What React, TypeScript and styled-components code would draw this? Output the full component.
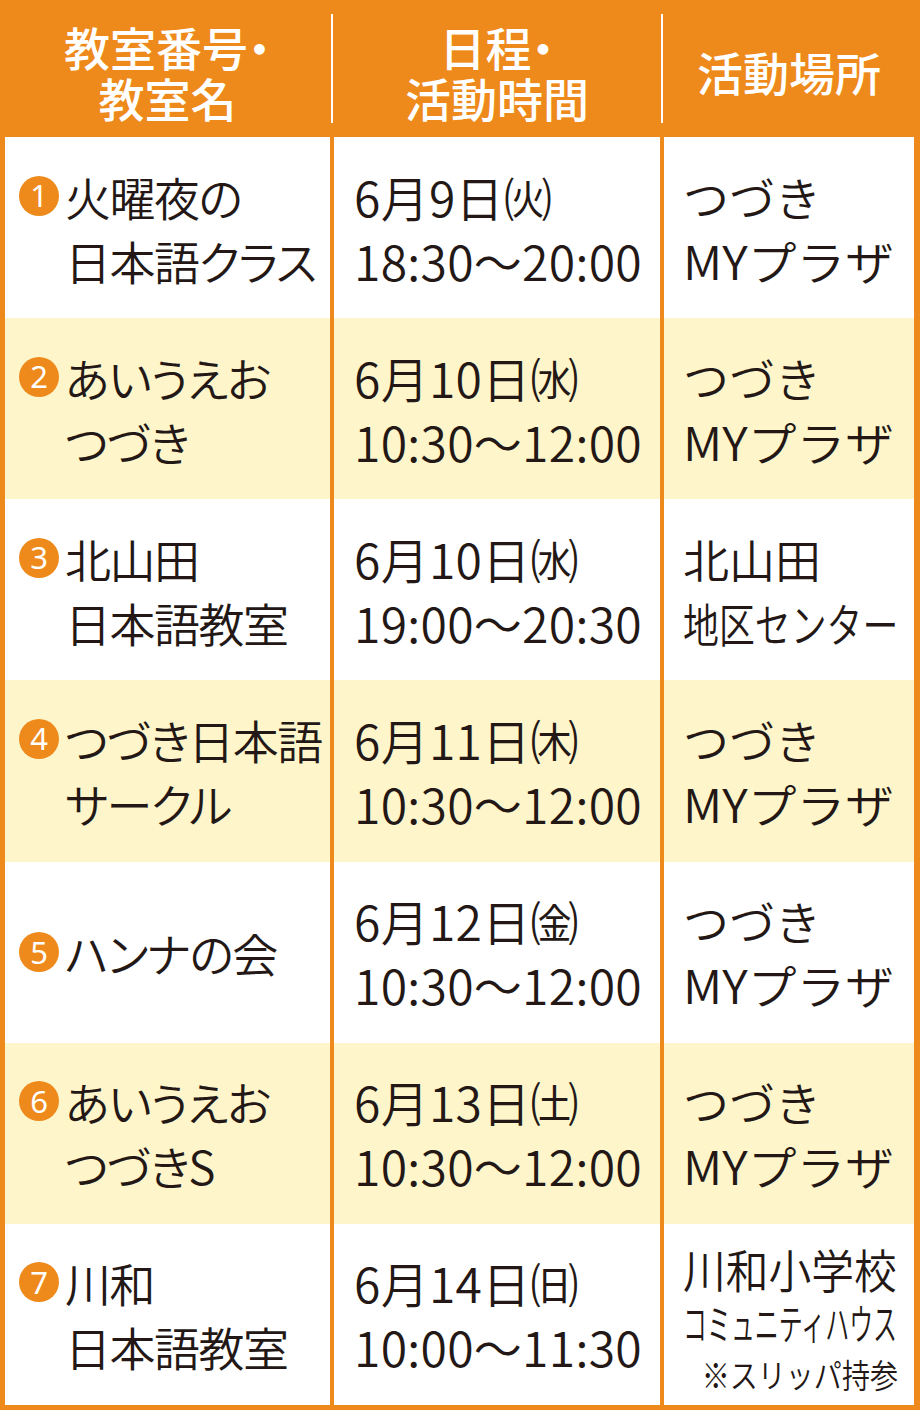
import React from 'react';
import styled, { createGlobalStyle } from 'styled-components';

const ORANGE = '#ee8a1b';
const CREAM = '#fef5cb';
const INK = '#231815';

const GlobalStyle = createGlobalStyle`
  html, body {
    margin: 0;
    padding: 0;
    background: #fff;
  }
  body {
    font-family: "Noto Sans CJK JP", "Noto Sans", sans-serif;
  }
`;

type PlaceLine = {
  text: string;
  size?: number;
  scale?: number;
  right?: boolean;
};

type Row = {
  no: number;
  name: string[];
  date: string;
  time: string;
  place: PlaceLine[];
};

const tsuzuki: PlaceLine[] = [{ text: 'つづき' }, { text: 'MYプラザ', scale: 1.06 }];

const rows: Row[] = [
  { no: 1, name: ['火曜夜の', '日本語クラス'], date: '6月9日㈫', time: '18:30〜20:00', place: tsuzuki },
  { no: 2, name: ['あいうえお', 'つづき'], date: '6月10日㈬', time: '10:30〜12:00', place: tsuzuki },
  {
    no: 3,
    name: ['北山田', '日本語教室'],
    date: '6月10日㈬',
    time: '19:00〜20:30',
    place: [{ text: '北山田' }, { text: '地区センター', scale: 0.78 }],
  },
  { no: 4, name: ['つづき日本語', 'サークル'], date: '6月11日㈭', time: '10:30〜12:00', place: tsuzuki },
  { no: 5, name: ['ハンナの会'], date: '6月12日㈮', time: '10:30〜12:00', place: tsuzuki },
  { no: 6, name: ['あいうえお', 'つづきS'], date: '6月13日㈯', time: '10:30〜12:00', place: tsuzuki },
  {
    no: 7,
    name: ['川和', '日本語教室'],
    date: '6月14日㈰',
    time: '10:00〜11:30',
    place: [
      { text: '川和小学校', scale: 0.93 },
      { text: 'コミュニティハウス', size: 42, scale: 0.57 },
      { text: '※スリッパ持参', size: 33, scale: 0.85, right: true },
    ],
  },
];

const Frame = styled.div`
  width: 920px;
  height: 1410px;
  box-sizing: border-box;
  padding: 0 6px 5px 5px;
  background: ${ORANGE};
  display: flex;
  flex-direction: column;
`;

const HeaderRow = styled.div`
  height: 137px;
  display: grid;
  grid-template-columns: 325px 4px 326px 4px 250px;
`;

const HeadCell = styled.div`
  display: flex;
  flex-direction: column;
  align-items: center;
  justify-content: center;
  padding-top: 6px;
  color: #fff;
  font-size: 46px;
  font-weight: 500;
  line-height: 51px;
  white-space: nowrap;
  font-feature-settings: "palt";
`;

const Divider = styled.div`
  display: flex;
  justify-content: center;
  padding: 14px 0 14px;

  &::after {
    content: '';
    width: 2px;
    background: #fff;
  }
`;

const Body = styled.div`
  flex: 1;
  display: grid;
  grid-template-columns: 325px 326px 250px;
  grid-template-rows: repeat(7, 1fr);
  column-gap: 4px;
`;

const Cell = styled.div<{ $alt: boolean; $pad: number }>`
  background: ${(p) => (p.$alt ? CREAM : '#fff')};
  display: flex;
  align-items: center;
  padding-left: ${(p) => p.$pad}px;
  color: ${INK};
  font-size: 46px;
  font-weight: 350;
  line-height: 64px;
  overflow: hidden;
`;

const NameWrap = styled.div`
  display: flex;
  align-items: flex-start;
  gap: 6px;
`;

const Badge = styled.span`
  flex: none;
  width: 40px;
  height: 40px;
  margin-top: 12px;
  border-radius: 50%;
  background: ${ORANGE};
  color: #fff;
  display: flex;
  align-items: center;
  justify-content: center;
  font-family: "Noto Sans", sans-serif;
  font-size: 31px;
  font-weight: 400;
  line-height: 1;
`;

const Lines = styled.div`
  display: flex;
  flex-direction: column;
`;

const NameLine = styled.span`
  white-space: nowrap;
  font-feature-settings: "palt";
  letter-spacing: -1.5px;
`;

const DateLine = styled.span`
  white-space: nowrap;
  font-size: 48px;
  letter-spacing: 0.3px;
`;

const PlaceLines = styled.div<{ $dense: boolean }>`
  width: 100%;
  display: flex;
  flex-direction: column;
  padding-top: ${(p) => (p.$dense ? 14 : 0)}px;
`;

const PlaceText = styled.span<{ $size: number; $scale: number; $right: boolean; $dense: boolean }>`
  display: block;
  width: max-content;
  align-self: ${(p) => (p.$right ? 'flex-end' : 'flex-start')};
  margin-right: ${(p) => (p.$right ? 16 : 0)}px;
  white-space: nowrap;
  font-size: ${(p) => p.$size}px;
  line-height: ${(p) => (p.$dense ? 53 : 64)}px;
  transform: scaleX(${(p) => p.$scale});
  transform-origin: ${(p) => (p.$right ? 'right' : 'left')} center;
`;

export default function App() {
  return (
    <>
      <GlobalStyle />
      <Frame>
        <HeaderRow>
          <HeadCell>
            <span>教室番号・</span>
            <span>教室名</span>
          </HeadCell>
          <Divider />
          <HeadCell>
            <span>日程・</span>
            <span>活動時間</span>
          </HeadCell>
          <Divider />
          <HeadCell>
            <span>活動場所</span>
          </HeadCell>
        </HeaderRow>

        <Body>
          {rows.map((r, i) => {
            const alt = i % 2 === 1;
            const dense = r.place.length > 2;
            return (
              <React.Fragment key={r.no}>
                <Cell $alt={alt} $pad={14}>
                  <NameWrap>
                    <Badge>{r.no}</Badge>
                    <Lines>
                      {r.name.map((n) => (
                        <NameLine key={n}>{n}</NameLine>
                      ))}
                    </Lines>
                  </NameWrap>
                </Cell>
                <Cell $alt={alt} $pad={20}>
                  <Lines>
                    <DateLine>{r.date}</DateLine>
                    <DateLine>{r.time}</DateLine>
                  </Lines>
                </Cell>
                <Cell $alt={alt} $pad={19}>
                  <PlaceLines $dense={dense}>
                    {r.place.map((p) => (
                      <PlaceText
                        key={p.text}
                        $size={p.size ?? 46}
                        $scale={p.scale ?? 1}
                        $right={!!p.right}
                        $dense={dense}
                      >
                        {p.text}
                      </PlaceText>
                    ))}
                  </PlaceLines>
                </Cell>
              </React.Fragment>
            );
          })}
        </Body>
      </Frame>
    </>
  );
}
